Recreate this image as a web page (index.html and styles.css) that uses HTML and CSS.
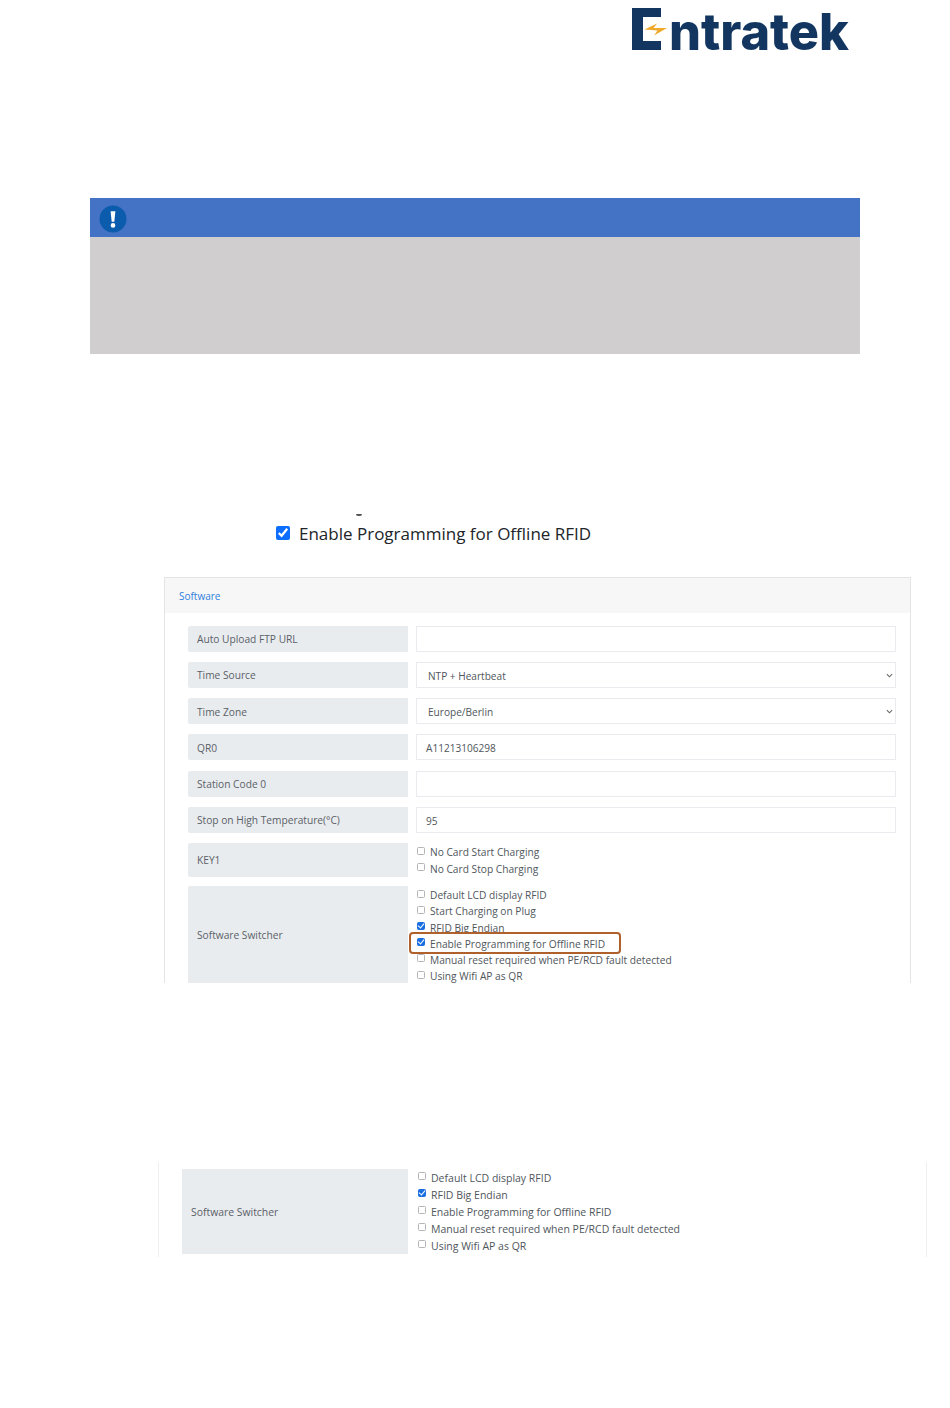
FILE: index.html
```html
<!DOCTYPE html>
<html lang="en">
<head>
<meta charset="utf-8">
<title>Entratek</title>
<link rel="stylesheet" href="styles.css">
</head>
<body>
<div class="page">
  <header class="brand">
    <svg class="brand-mark" viewBox="0 0 36 42" width="36" height="42" aria-hidden="true">
      <path d="M0 0H29V9H11V33H29V42H0Z" fill="#12365f"/>
      <path d="M12.5 21.5L25 15.5L21.5 20H35L22 27.5L25.5 22.5Z" fill="#f0a92b"/>
    </svg>
    <span class="brand-name">ntratek</span>
  </header>

  <section class="notice">
    <div class="notice-bar">
      <svg class="notice-icon" viewBox="0 0 28 28" width="28" height="28" aria-hidden="true">
        <circle cx="14" cy="14" r="13.5" fill="#0b5cad"/>
        <path d="M11.6 6.2H16.4L15.3 16.8H12.7Z" fill="#fff"/>
        <circle cx="14" cy="20.4" r="2.3" fill="#fff"/>
      </svg>
    </div>
    <div class="notice-body"></div>
  </section>

  <section class="crop-option">
    <div class="crop-cut"></div>
    <label class="big-check"><input type="checkbox" checked>Enable Programming for Offline RFID</label>
  </section>

  <section class="card">
    <div class="card-head">Software</div>
    <div class="card-body">
      <div class="row"><div class="row-label">Auto Upload FTP URL</div><div class="field"></div></div>
      <div class="row"><div class="row-label">Time Source</div><div class="field field-select">NTP + Heartbeat<svg class="chevron" viewBox="0 0 8 5" width="7" height="5" aria-hidden="true"><path d="M1 1L4 4L7 1" fill="none" stroke="#666" stroke-width="1.2"/></svg></div></div>
      <div class="row"><div class="row-label">Time Zone</div><div class="field field-select">Europe/Berlin<svg class="chevron" viewBox="0 0 8 5" width="7" height="5" aria-hidden="true"><path d="M1 1L4 4L7 1" fill="none" stroke="#666" stroke-width="1.2"/></svg></div></div>
      <div class="row"><div class="row-label">QR0</div><div class="field">A11213106298</div></div>
      <div class="row"><div class="row-label">Station Code 0</div><div class="field"></div></div>
      <div class="row"><div class="row-label">Stop on High Temperature(°C)</div><div class="field">95</div></div>
      <div class="row row-key"><div class="row-label">KEY1</div>
        <div class="checks">
          <label class="check"><input type="checkbox">No Card Start Charging</label>
          <label class="check"><input type="checkbox">No Card Stop Charging</label>
        </div>
      </div>
      <div class="row row-switch"><div class="row-label">Software Switcher</div>
        <div class="checks">
          <label class="check"><input type="checkbox">Default LCD display RFID</label>
          <label class="check"><input type="checkbox">Start Charging on Plug</label>
          <label class="check"><input type="checkbox" checked>RFID Big Endian</label>
          <label class="check check-marked"><input type="checkbox" checked>Enable Programming for Offline RFID</label>
          <label class="check"><input type="checkbox">Manual reset required when PE/RCD fault detected</label>
          <label class="check"><input type="checkbox">Using Wifi AP as QR</label>
        </div>
      </div>
    </div>
  </section>

  <section class="panel">
    <div class="panel-label">Software Switcher</div>
    <div class="checks checks-wide">
      <label class="check"><input type="checkbox">Default LCD display RFID</label>
      <label class="check"><input type="checkbox" checked>RFID Big Endian</label>
      <label class="check"><input type="checkbox">Enable Programming for Offline RFID</label>
      <label class="check"><input type="checkbox">Manual reset required when PE/RCD fault detected</label>
      <label class="check"><input type="checkbox">Using Wifi AP as QR</label>
    </div>
  </section>
</div>
</body>
</html>
```

FILE: styles.css
```css
* { box-sizing: border-box; }
html, body { margin: 0; background: #fff; }
body { font-family: "Open Sans", "Noto Sans", sans-serif; color: #495057; }
.page { width: 950px; height: 1408px; overflow: hidden; padding-top: 8px; }

.brand { display: flex; align-items: flex-end; margin-left: 632px; height: 42px; }
.brand-mark { flex: none; }
.brand-name {
  margin: 0 0 -7px 1px; font-family: Inter, sans-serif; font-weight: 800; font-size: 50.4px;
  line-height: 51px; color: #12365f;
}

.notice { margin: 148px 90px 0; }
.notice-bar { height: 39px; background: #4472c4; padding: 7px 0 0 9px; }
.notice-icon { display: block; }
.notice-body { height: 117px; background: #d0cece; }

.crop-option { margin: 160px 0 0 276px; height: 37px; }
.crop-cut { height: 2px; margin-left: 80px; width: 6px; background: #555; border-radius: 0 0 3px 3px; }
.big-check { display: flex; align-items: center; gap: 9px; margin-top: 6px; font-size: 17px; line-height: 24px; color: #212529; }
.big-check input { width: 14px; height: 14px; margin: 0; accent-color: #0d6efd; position: relative; top: -1px; }

.card {
  margin: 26px 0 0 164px; width: 747px; height: 406px; overflow: hidden;
  border: 1px solid #e4e4e4; border-bottom: 0;
}
.card-head {
  height: 35px; padding: 0 14px; background: #f7f7f7; color: #2f7fe0;
  font-size: 10px; line-height: 37px;
}
.card-body { padding: 12.5px 15px 0 23px; display: flex; flex-direction: column; gap: 10.3px; }

.row { display: grid; grid-template-columns: 220px 480px; column-gap: 8px; min-height: 26px; }
.row-label {
  display: flex; align-items: center; padding: 1px 0 0 9px; background: #e9ecef;
  border-radius: 2px 0 0 2px; font-size: 10.2px; color: #5a6167;
}
.field {
  height: 26px; border: 1px solid #e9ebee; padding-left: 9px; font-size: 10.1px; line-height: 27px;
  color: #4f565c; position: relative; background: #fff;
}
.field-select { padding-left: 11px; }
.chevron { position: absolute; right: 2px; top: 10px; }

.row-key { height: 32px; }
.row-switch { height: 96px; flex: none; }

.checks { display: flex; flex-direction: column; padding-top: 1px; font-size: 10.2px; }
.row-switch .checks { padding-top: 1.5px; }
.check { display: flex; align-items: center; gap: 5px; height: 16.2px; line-height: 16px; white-space: nowrap; color: #4f565c; flex: none; }
.check input {
  appearance: none; position: relative; width: 8px; height: 8px; margin: -3px 0 0 1px; flex: none;
  border: 1px solid #b5b5b5; border-radius: 1.5px; background: #fff;
}
.check input:checked { background: #1a6fe0; border-color: #1a6fe0; }
.check input:checked::after {
  content: ""; position: absolute; left: 1px; top: -1px; width: 3px; height: 5px;
  border: solid #fff; border-width: 0 1.2px 1.2px 0; transform: rotate(40deg);
}

.check-marked { position: relative; z-index: 1; }
.check-marked::before {
  content: ""; position: absolute; z-index: -1; left: -7px; top: -4px; width: 208px; height: 18px;
  background: #fff; border: 2px solid #b0602a; border-radius: 4px;
}

.panel {
  margin: 179px 0 0 158px; width: 769px; height: 95px; padding: 7px 0 0 23px;
  border: solid #efefef; border-width: 0 1px; display: grid;
  grid-template-columns: 226px 1fr; column-gap: 9px; overflow: hidden;
}
.panel-label {
  height: 85px; display: flex; align-items: center; padding-left: 9px; background: #e9ecef;
  font-size: 10.4px; color: #5a6167;
}
.checks-wide { padding-top: 0; font-size: 10.5px; }
.checks-wide .check { height: 17px; }
```
